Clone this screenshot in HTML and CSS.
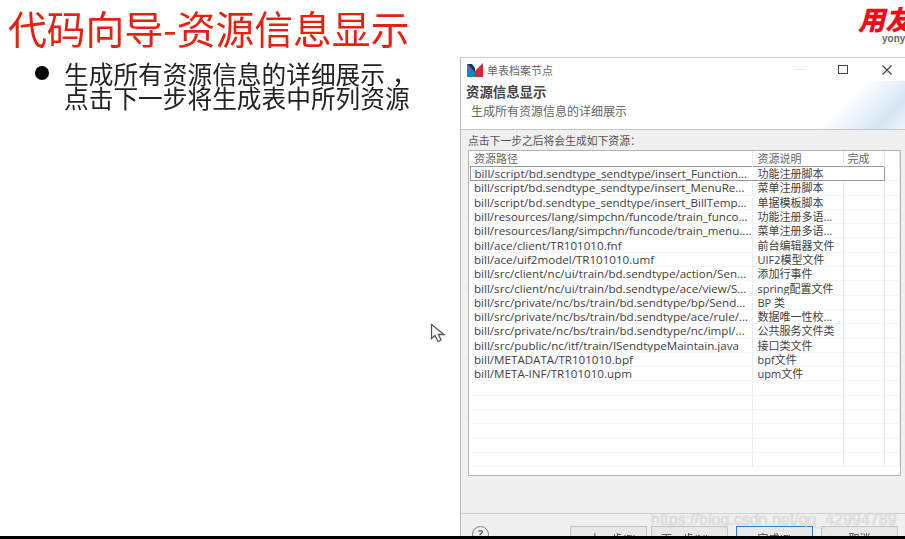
FILE: index.html
```html
<!DOCTYPE html>
<html lang="zh-CN">
<head>
    <meta charset="UTF-8">
    <meta name="viewport" content="width=device-width, initial-scale=1.0">
    <title>代码向导-资源信息显示</title>
    <link rel="stylesheet" href="styles.css">
</head>
<body>
    <div class="slide">
        <div class="slide-left">
            <h1 class="slide-title">代码向导-资源信息显示</h1>
            <div class="point">
                <span class="point-dot"></span>
                <p class="point-text">生成所有资源信息的详细展示<span class="comma">，</span><br>点击下一步将生成表中所列资源</p>
            </div>
        </div>

        <div class="slide-right">
            <div class="logo">
                <div class="logo-mark">用友</div>
                <div class="logo-sub">yonyou</div>
            </div>

            <div class="dialog">
                <div class="titlebar">
                    <svg class="app-icon" width="16" height="14" viewBox="0 0 16 14">
                        <path d="M0 1 L8 8 L8 14 L0 14 Z" fill="#1c7fd0"/>
                        <path d="M16 0 L8 8 L8 14 L16 14 Z" fill="#d8273a"/>
                        <path d="M0 1 L5 1 L8 5 L8 9 Z" fill="#20304f"/>
                    </svg>
                    <span class="titlebar-text">单表档案节点</span>
                    <div class="win-btns">
                        <span class="win-min"></span>
                        <span class="win-max"></span>
                        <svg class="win-close" width="10" height="10" viewBox="0 0 10 10">
                            <path d="M0.5 0.5 L9.5 9.5 M9.5 0.5 L0.5 9.5" stroke="#444" stroke-width="1.1"/>
                        </svg>
                    </div>
                </div>

                <div class="banner">
                    <h2 class="banner-title">资源信息显示</h2>
                    <p class="banner-sub">生成所有资源信息的详细展示</p>
                </div>

                <div class="body-area">
                    <p class="table-label">点击下一步之后将会生成如下资源：</p>
                    <div class="table-box">
                        <table class="res-table">
                            <colgroup>
                                <col class="col-path">
                                <col class="col-desc">
                                <col class="col-done">
                                <col>
                            </colgroup>
                            <thead>
                                <tr><th>资源路径</th><th>资源说明</th><th>完成</th><th></th></tr>
                            </thead>
                            <tbody>
                                <tr class="focused"><td>bill/script/bd.sendtype_sendtype/insert_Function...</td><td>功能注册脚本</td><td></td><td></td></tr>
                                <tr><td>bill/script/bd.sendtype_sendtype/insert_MenuRe...</td><td>菜单注册脚本</td><td></td><td></td></tr>
                                <tr><td>bill/script/bd.sendtype_sendtype/insert_BillTemp...</td><td>单据模板脚本</td><td></td><td></td></tr>
                                <tr><td>bill/resources/lang/simpchn/funcode/train_funco...</td><td>功能注册多语...</td><td></td><td></td></tr>
                                <tr><td>bill/resources/lang/simpchn/funcode/train_menu....</td><td>菜单注册多语...</td><td></td><td></td></tr>
                                <tr><td>bill/ace/client/TR101010.fnf</td><td>前台编辑器文件</td><td></td><td></td></tr>
                                <tr><td>bill/ace/uif2model/TR101010.umf</td><td>UIF2模型文件</td><td></td><td></td></tr>
                                <tr><td>bill/src/client/nc/ui/train/bd.sendtype/action/Sen...</td><td>添加行事件</td><td></td><td></td></tr>
                                <tr><td>bill/src/client/nc/ui/train/bd.sendtype/ace/view/S...</td><td>spring配置文件</td><td></td><td></td></tr>
                                <tr><td>bill/src/private/nc/bs/train/bd.sendtype/bp/Send...</td><td>BP 类</td><td></td><td></td></tr>
                                <tr><td>bill/src/private/nc/bs/train/bd.sendtype/ace/rule/...</td><td>数据唯一性校...</td><td></td><td></td></tr>
                                <tr><td>bill/src/private/nc/bs/train/bd.sendtype/nc/impl/...</td><td>公共服务文件类</td><td></td><td></td></tr>
                                <tr><td>bill/src/public/nc/itf/train/ISendtypeMaintain.java</td><td>接口类文件</td><td></td><td></td></tr>
                                <tr><td>bill/METADATA/TR101010.bpf</td><td>bpf文件</td><td></td><td></td></tr>
                                <tr><td>bill/META-INF/TR101010.upm</td><td>upm文件</td><td></td><td></td></tr>
                                <tr><td></td><td></td><td></td><td></td></tr>
                                <tr><td></td><td></td><td></td><td></td></tr>
                                <tr><td></td><td></td><td></td><td></td></tr>
                                <tr><td></td><td></td><td></td><td></td></tr>
                                <tr><td></td><td></td><td></td><td></td></tr>
                                <tr><td></td><td></td><td></td><td></td></tr>
                            </tbody>
                        </table>
                    </div>
                </div>

                <div class="footer">
                    <span class="help">?</span>
                    <div class="footer-btns">
                        <button class="btn">&lt; 上一步(B)</button>
                        <button class="btn">下一步(N) &gt;</button>
                        <button class="btn btn-default">完成(F)</button>
                        <button class="btn">取消</button>
                    </div>
                </div>
            </div>
        </div>

        <svg class="cursor" width="17" height="20" viewBox="0 0 17 20">
            <path d="M1.5 1.5 L1.5 15.5 L5 12.5 L8 18.5 L11 17 L8.5 11.5 L14 11.5 Z" fill="#fff" stroke="#555" stroke-width="1.3"/>
        </svg>
        <div class="watermark">https://blog.csdn.net/qq_42994789</div>
    </div>
    <div class="blackbar"></div>
</body>
</html>
```

FILE: styles.css
```css
* {
    margin: 0;
    padding: 0;
    box-sizing: border-box;
}

body {
    width: 905px;
    height: 539px;
    overflow: hidden;
    background: #fff;
    font-family: 'Open Sans', 'Noto Sans CJK SC', sans-serif;
    text-spacing-trim: space-all;
}

.slide {
    position: relative;
    display: flex;
    height: 536px;
    overflow: hidden;
}

.blackbar {
    height: 3px;
    background: #000;
}

.slide-left {
    width: 460px;
    flex-shrink: 0;
    padding: 4px 0 0 8px;
    font-family: 'Noto Sans CJK SC', sans-serif;
}

.slide-title {
    font-size: 38.8px;
    font-weight: 400;
    line-height: 46px;
    color: #e8200f;
    white-space: nowrap;
    filter: blur(0.3px);
}

.point {
    display: flex;
    margin-top: 11px;
    padding-left: 27px;
}

.point-dot {
    width: 14px;
    height: 14px;
    margin-top: 5px;
    margin-right: 15px;
    border-radius: 50%;
    background: #000;
    flex-shrink: 0;
}

.point-text {
    font-size: 24.7px;
    line-height: 24px;
    color: #222;
    white-space: nowrap;
    filter: blur(0.3px);
}

.comma {
    margin-left: 7px;
}

.slide-right {
    flex: 1;
    min-width: 0;
    display: flex;
    flex-direction: column;
}

.logo {
    flex-shrink: 0;
    height: 57px;
    padding: 4px 0 0 398px;
    white-space: nowrap;
    overflow: hidden;
}

.logo-mark {
    font-family: 'Noto Sans CJK SC', sans-serif;
    font-size: 27px;
    font-weight: 900;
    font-style: italic;
    line-height: 30px;
    color: #ee0c17;
}

.logo-sub {
    padding-left: 24px;
    font-family: 'Liberation Sans', sans-serif;
    font-size: 10px;
    font-weight: bold;
    line-height: 10px;
    color: #666;
}

.dialog {
    flex: 1;
    min-height: 0;
    display: flex;
    flex-direction: column;
    border-top: 1px solid #c8c8c8;
    border-left: 1px solid #b8b8b8;
    background: #f0f0f0;
    color: #555;
    filter: blur(0.35px);
}

.titlebar {
    flex-shrink: 0;
    display: flex;
    align-items: center;
    height: 23px;
    padding-left: 6px;
    background: #fff;
}

.app-icon {
    margin-right: 4px;
}

.titlebar-text {
    font-size: 11px;
    color: #666;
}

.win-btns {
    margin-left: auto;
    display: flex;
    align-items: center;
    padding-right: 13px;
}

.win-min {
    width: 10px;
    height: 1px;
    margin-right: 33px;
    background: #e4e4e4;
}

.win-max {
    width: 10px;
    height: 9px;
    margin-right: 34px;
    border: 1px solid #444;
}

.banner {
    flex-shrink: 0;
    height: 49px;
    padding: 2px 0 0 5px;
    background: linear-gradient(135deg, #fff 0, #fff 82%, #d5e6f5 94%, #eef5fb 100%);
    border-bottom: 1px solid #c4c4c4;
}

.banner-title {
    font-size: 13.4px;
    font-weight: 700;
    line-height: 18px;
    color: #444;
}

.banner-sub {
    margin-top: 3px;
    padding-left: 5px;
    font-size: 12px;
    line-height: 16px;
    color: #666;
}

.body-area {
    flex-shrink: 0;
    height: 384px;
    padding: 2px 4px 0 7px;
    border-bottom: 1px solid #d0d0d0;
}

.table-label {
    margin-bottom: 1px;
    font-size: 10.8px;
    line-height: 17px;
    color: #555;
}

.table-box {
    height: 326px;
    overflow: hidden;
    padding-left: 0.5px;
    border: 1.5px solid #b4b4b4;
    background: #fff;
}

.res-table {
    width: 100%;
    table-layout: fixed;
    border-collapse: collapse;
}

.col-path { width: 282px; }
.col-desc { width: 91px; }
.col-done { width: 41px; }

.res-table th {
    height: 15px;
    padding: 1px 4px 0;
    font-size: 11px;
    font-weight: 400;
    line-height: 14px;
    text-align: left;
    color: #666;
    border-right: 1px solid #e3ecec;
}

.res-table td {
    height: 14.3px;
    padding: 0 4px;
    font-size: 11.6px;
    line-height: 13px;
    color: #404040;
    white-space: nowrap;
    overflow: hidden;
    border-right: 1px solid #e6efef;
    border-bottom: 1px solid #f3f7f7;
}

.res-table td:nth-child(2),
.res-table th:nth-child(2) {
    padding-left: 5px;
    font-size: 11px;
}

.focused td {
    border-top: 1px solid #999;
    border-bottom: 1px solid #999;
    border-right-color: transparent;
}

.focused td:first-child {
    border-left: 1px solid #999;
}

.focused td:nth-child(3) {
    border-right-color: #999;
}

.focused td:last-child {
    border-top-color: transparent;
    border-bottom-color: #f3f7f7;
    border-right-color: #e6efef;
}

.footer {
    flex-shrink: 0;
    display: flex;
    padding: 12px 7px 0 11px;
}

.help {
    width: 17px;
    height: 17px;
    border: 1.5px solid #6d7f92;
    border-radius: 50%;
    font-size: 11px;
    font-weight: 700;
    line-height: 14px;
    text-align: center;
    color: #4e6a86;
}

.footer-btns {
    margin-left: auto;
    display: flex;
}

.btn {
    width: 77px;
    height: 24px;
    margin-left: 4px;
    border: 1px solid #c4c4c4;
    background: #e8e8e8;
    font-family: inherit;
    font-size: 11px;
    color: #444;
}

.btn-default {
    margin-left: 8px;
    margin-right: 8px;
    border: 1.5px solid #2b7cc4;
}

.btn-default + .btn {
    margin-left: 0;
}

.cursor {
    position: absolute;
    left: 430px;
    top: 323px;
}

.watermark {
    position: absolute;
    left: 651px;
    top: 509px;
    font-family: 'Liberation Sans', sans-serif;
    font-size: 16px;
    line-height: 22px;
    white-space: nowrap;
    color: rgba(232, 232, 232, 0.85);
    text-shadow: 0 0 1px rgba(120, 120, 120, 0.5);
}
```
